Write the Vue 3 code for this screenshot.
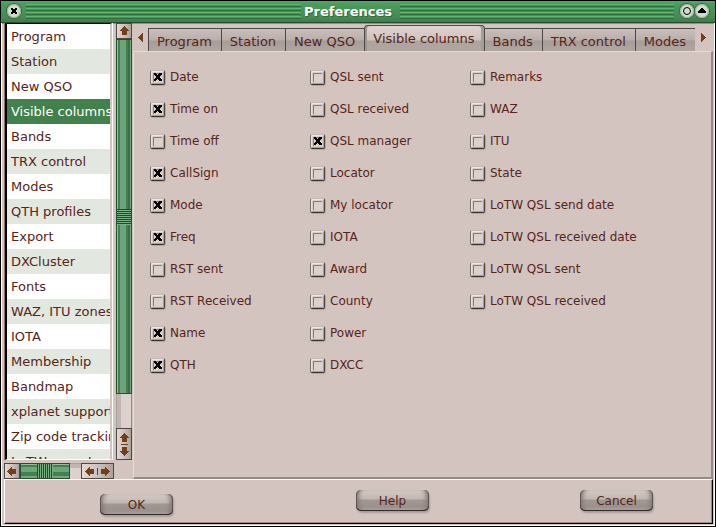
<script setup>
import { ref, reactive } from 'vue'

const pages = [
  'Program', 'Station', 'New QSO', 'Visible columns', 'Bands', 'TRX control',
  'Modes', 'QTH profiles', 'Export', 'DXCluster', 'Fonts', 'WAZ, ITU zones',
  'IOTA', 'Membership', 'Bandmap', 'xplanet support', 'Zip code tracking', 'LoTW export',
]
const tabs = pages.slice(0, 7)
const current = ref('Visible columns')

const on = (label) => ({ label, checked: true })
const off = (label) => ({ label, checked: false })
const groups = reactive([
  [on('Date'), on('Time on'), off('Time off'), on('CallSign'), on('Mode'), on('Freq'),
    off('RST sent'), off('RST Received'), on('Name'), on('QTH')],
  [off('QSL sent'), off('QSL received'), on('QSL manager'), off('Locator'), off('My locator'),
    off('IOTA'), off('Award'), off('County'), off('Power'), off('DXCC')],
  [off('Remarks'), off('WAZ'), off('ITU'), off('State'), off('LoTW QSL send date'),
    off('LoTW QSL received date'), off('LoTW QSL sent'), off('LoTW QSL received')],
])
</script>

<template>
  <div class="window">
    <header class="titlebar">
      <button class="orb" aria-label="Close">
        <svg viewBox="0 0 14 14"><path d="M4 4h2v1h2V4h2v2H9v2h1v2H8V9H6v1H4V8h1V6H4z" /></svg>
      </button>
      <div class="stripes"></div>
      <h1>Preferences</h1>
      <div class="stripes"></div>
      <div class="orbs">
        <button class="orb" aria-label="Minimize">
          <svg viewBox="0 0 14 14"><circle cx="7" cy="7" r="3.5" fill="none" stroke="#000" /></svg>
        </button>
        <button class="orb" aria-label="Shade">
          <svg viewBox="0 0 14 14"><path d="M6 4h2v1h1v1h1v1h1v2H3V7h1V6h1V5h1z" /></svg>
        </button>
      </div>
    </header>

    <div class="frame">
      <main class="main">
        <aside class="sidebar">
          <nav class="list">
            <button
              v-for="page in pages"
              :key="page"
              class="item"
              :class="{ selected: page === current }"
              @click="current = page"
            >{{ page }}</button>
          </nav>

          <div class="bar vertical">
            <button class="step" aria-label="Scroll up">
              <svg viewBox="0 0 14 14"><path d="M7 2h1v1h1v1h1v1h1v1h1v1h-2v4H5V7H3V6h1V5h1V4h1V3h1z" /></svg>
            </button>
            <div class="thumb"><div class="grip"></div></div>
            <div class="trough"></div>
            <div class="pair">
              <button class="arrow" aria-label="Scroll up">
                <svg viewBox="0 0 14 14"><path d="M7 3h1v1h1v1h1v1h1v1h1v1h-2v4H5V8H3V7h1V6h1V5h1V4h1z" /></svg>
              </button>
              <i class="divider"></i>
              <button class="arrow" aria-label="Scroll down">
                <svg viewBox="0 0 14 14"><path d="M5 2h5v4h2v1h-1v1h-1v1H9v1H8v1H7v-1H6V9H5V8H4V7H3V6h2z" /></svg>
              </button>
            </div>
          </div>

          <div class="bar horizontal">
            <button class="step" aria-label="Scroll left">
              <svg viewBox="0 0 14 14"><path d="M2 7h1V6h1V5h1V4h1V3h1v2h4v5H7v2H6v-1H5v-1H4V9H3V8H2z" /></svg>
            </button>
            <div class="thumb"><div class="grip"></div></div>
            <div class="trough"></div>
            <div class="pair">
              <button class="arrow" aria-label="Scroll left">
                <svg viewBox="0 0 14 14"><path d="M2 7h1V6h1V5h1V4h1V3h1v2h4v5H7v2H6v-1H5v-1H4V9H3V8H2z" /></svg>
              </button>
              <i class="divider"></i>
              <button class="arrow" aria-label="Scroll right">
                <svg viewBox="0 0 14 14"><path d="M12 7h-1V6h-1V5H9V4H8V3H7v2H3v5h4v2h1v-1h1v-1h1V9h1V8h1z" /></svg>
              </button>
            </div>
          </div>
        </aside>

        <section class="content">
          <div class="tabrow">
            <button class="nudge" aria-label="Previous tabs">
              <svg viewBox="0 0 6 9"><path d="M5 0v9L0 5V4z" /></svg>
            </button>
            <div class="tabs" role="tablist">
              <button
                v-for="tab in tabs"
                :key="tab"
                role="tab"
                class="tab"
                :class="{ active: tab === current }"
                :aria-selected="tab === current"
                @click="current = tab"
              >{{ tab }}</button>
            </div>
            <button class="nudge" aria-label="Next tabs">
              <svg viewBox="0 0 6 9"><path d="M0 0v9l5-4V4z" /></svg>
            </button>
          </div>

          <div class="panel">
            <div v-for="(group, g) in groups" :key="g" class="group">
              <label v-for="option in group" :key="option.label" class="option">
                <span class="check">
                  <input v-model="option.checked" type="checkbox">
                  <svg v-if="option.checked" viewBox="0 0 15 15">
                    <path d="M4 3h2v1h1v1h1V4h1V3h3v2h-1v1h-1v2h1v1h1v2H9v-1H8V9H7v1H6v1H4V9h1V8h1V6H5V5H4z" />
                  </svg>
                </span>
                <span>{{ option.label }}</span>
              </label>
            </div>
          </div>
        </section>
      </main>

      <footer class="actions">
        <button class="push low">OK</button>
        <button class="push">Help</button>
        <button class="push">Cancel</button>
      </footer>
    </div>
  </div>
</template>

<style>
body {
  background: #000;
}
</style>

<style scoped>
* {
  box-sizing: border-box;
}

button {
  margin: 0;
  padding: 0;
  border: 0;
  background: none;
  font: inherit;
  color: inherit;
}

svg {
  display: block;
  shape-rendering: crispEdges;
}

.window {
  display: flex;
  flex-direction: column;
  height: 100vh;
  border: 1px solid #000;
  background: #d4c4c0;
  color: #58241a;
  font: 13px/16px "DejaVu Sans", sans-serif;
}

.titlebar {
  display: grid;
  grid-template-columns: 14px 1fr auto 1fr auto;
  align-items: center;
  flex: none;
  height: 22px;
  padding: 0 6px 2px;
  border-bottom: 1px solid #28502f;
  background: linear-gradient(#55a866 0, #4a9c5c 3px, #458b52 16px, #3f7c4a);
}

.titlebar h1 {
  margin: 0 8px 0 3px;
  padding-top: 2px;
  font-size: 13px;
  line-height: 18px;
  color: #fff;
  text-shadow: 1px 1px #35683e;
}

.stripes {
  height: 15px;
  background: repeating-linear-gradient(#5cba70 0 1px, #48945a 1px 2px, #346b40 2px 3px, #48905a 3px 4px);
}

.stripes:nth-child(2) {
  margin-left: 5px;
}

.stripes:nth-child(4) {
  margin-right: 6px;
}

.orbs {
  display: flex;
  gap: 1px;
}

.orb {
  width: 14px;
  height: 14px;
  border-radius: 7px;
  background: #d0dccc;
  box-shadow: inset 0 0 0 1px #9ab49b, 0 0 0 1px #3c6a45;
}

.orb circle {
  shape-rendering: auto;
}

.frame {
  display: flex;
  flex-direction: column;
  flex: 1;
  min-height: 0;
  border: solid #fff;
  border-width: 0 1px 1px;
  box-shadow: inset 0 1px #948a86;
  padding: 0 1px 1px 2px;
}

.main {
  display: grid;
  grid-template-columns: 129px 1fr;
  flex: 1;
  min-height: 0;
}

.sidebar {
  display: grid;
  grid-template-columns: 110px 16px;
  grid-template-rows: minmax(0, 1fr) 16px;
  gap: 3px 2px;
  min-height: 0;
}

.list {
  display: flex;
  flex-direction: column;
  overflow: hidden;
  border: solid;
  border-width: 1px 2px 1px 2px;
  border-color: #000 #d4c4c0 #fff #000;
  margin: 0 2px 0 1px;
  background: #fff;
  box-shadow: -1px 0 #8e706c, 1px 0 #fff;
}

.item {
  flex: none;
  height: 25px;
  padding: 1px 0 0 4px;
  text-align: left;
  white-space: nowrap;
}

.item:nth-child(even) {
  background: #e2e8df;
}

.item.selected {
  background: #42804c;
  color: #fff;
}

.bar {
  display: flex;
  background: #b8aeaa;
}

.bar svg {
  width: 14px;
  height: 14px;
  fill: #71401a;
}

.vertical {
  flex-direction: column;
}

.horizontal {
  width: 110px;
}

.step,
.pair {
  display: flex;
  align-items: center;
  justify-content: center;
  flex: none;
  border: 1px solid #4c4846;
  background: linear-gradient(90deg, #e4d8d4, #c8bcb8 60%, #aaa09c);
}

.step {
  width: 16px;
  height: 16px;
}

.horizontal .pair {
  width: 33px;
  height: 16px;
}

.vertical .pair {
  flex-direction: column;
  width: 16px;
  height: 32px;
}

.divider {
  background: #71401a;
}

.horizontal .divider {
  width: 1px;
  height: 7px;
}

.vertical .divider {
  width: 7px;
  height: 1px;
}

.thumb {
  display: flex;
  align-items: center;
  justify-content: center;
  border: 1px solid #24502f;
}

.vertical .thumb {
  flex: 355;
  background: linear-gradient(90deg, #91bd97 0 1px, #42804c 1px 3px, #6fa37b 3px 9px, #42804c 9px 11px, #357340 11px 13px, #75a77e 13px);
}

.horizontal .thumb {
  flex: 49;
  background: linear-gradient(#91bd97 0 1px, #42804c 1px 3px, #6fa37b 3px 8px, #42804c 8px 12px, #75a77e 12px);
}

.vertical .grip {
  width: 100%;
  height: 16px;
  background: repeating-linear-gradient(#224b2b 0 1px, #78af83 1px 2px);
}

.horizontal .grip {
  width: 16px;
  height: 100%;
  background: repeating-linear-gradient(90deg, #224b2b 0 1px, #78af83 1px 2px);
}

.vertical .trough {
  flex: 34;
  background: linear-gradient(90deg, #aaa09c 0 1px, #c0b5b1 1px 5px, #ddd1cd 5px 15px, #948a86 15px);
}

.horizontal .trough {
  flex: 11;
  background: linear-gradient(#aaa09c 0 1px, #c0b5b1 1px 5px, #ddd1cd 5px);
}

.content {
  display: flex;
  flex-direction: column;
  min-width: 0;
}

.tabrow {
  display: flex;
  height: 28px;
  padding-top: 2px;
}

.nudge {
  display: flex;
  align-items: center;
  justify-content: center;
  flex: none;
  width: 15px;
  padding-bottom: 2px;
}

.nudge:last-child {
  width: 18px;
}

.nudge svg {
  width: 6px;
  height: 9px;
  fill: #71401a;
}

.tabs {
  display: flex;
  align-items: flex-end;
  flex: 1;
  min-width: 0;
  overflow: hidden;
}

.tab {
  flex: none;
  height: 23px;
  padding: 3px 9px 0 8px;
  border-top: 1px solid #4c4846;
  border-left: 1px solid #4c4846;
  background: linear-gradient(#c9bfbb, #b9aeaa 11px, #a69c98 12px, #b0a6a2);
  white-space: nowrap;
}

.tab.active {
  height: 26px;
  padding-bottom: 2px;
  border: 1px solid #4c4846;
  border-bottom: 0;
  border-radius: 4px 4px 0 0;
  background: linear-gradient(#e0d4d0, #cdc2be 14px, #aca29e 15px, #b0a6a2);
  box-shadow: inset 2px 0 #9d9490, inset -3px 0 #a69c98;
}

.tab.active + .tab {
  border-left: 0;
}

.panel {
  display: grid;
  grid-template-columns: repeat(2, 160px) 1fr;
  align-items: start;
  flex: 1;
  min-height: 0;
  padding: 9px 16px;
  border: solid;
  border-width: 1px 2px 2px 1px;
  border-color: #e4dad7 #948a86 #948a86 #e4dad7;
  font-size: 12px;
}

.group {
  display: grid;
  justify-items: start;
}

.option {
  display: flex;
  align-items: center;
  gap: 5px;
  height: 32px;
  white-space: nowrap;
}

.check {
  display: grid;
  width: 15px;
  height: 15px;
}

.check > * {
  grid-area: 1 / 1;
  width: 15px;
  height: 15px;
}

.check svg {
  pointer-events: none;
}

.check input {
  appearance: none;
  margin: 0;
  border: 1px solid;
  border-color: #c5b9b5 #4a4644 #383432 #77706d;
  border-radius: 2px;
  background: linear-gradient(#ddd1cd, #ddd1cd) 3px 3px / 8px 8px no-repeat, linear-gradient(#867d79, #867d79) 2px 2px / 9px 1px no-repeat, linear-gradient(#867d79, #867d79) 2px 2px / 1px 9px no-repeat, #d8cdc9;
  box-shadow: 1px 1px #b0a5a1, inset 1px 1px #ece4e1, inset -1px -1px #aaa09c;
}

.actions {
  display: grid;
  grid-template-columns: 256fr 224fr 132fr;
  align-items: start;
  flex: none;
  height: 45px;
  padding: 10px 0 8px 95px;
  border: 1px solid;
  border-color: #fff #000 #000 #fff;
  box-shadow: inset -1px -1px #a08884;
  font-size: 12px;
}

.push {
  width: 73px;
  height: 21px;
  border-radius: 5px;
  background: linear-gradient(#d4cac6 0, #c0b6b2 9px, #a29893 10px, #9b918c 17px, #b0a6a2);
  box-shadow: inset 0 -1px #302a28, inset 1px 0 #5d5653, inset -1px 0 #5d5653, inset 6px 0 4px -3px #827874, inset -6px 0 4px -3px #827874, 1px 2px 2px #a89c98;
}

.push.low {
  align-self: end;
}
</style>
